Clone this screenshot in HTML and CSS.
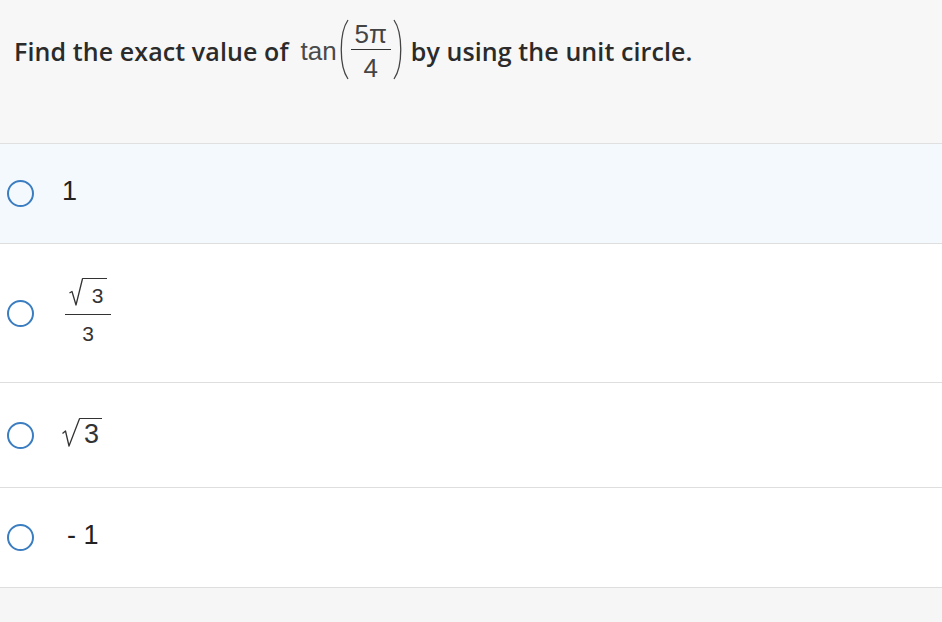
FILE: index.html
```html
<!DOCTYPE html>
<html lang="en">
<head>
<meta charset="utf-8">
<title>Unit circle question</title>
<link rel="stylesheet" href="styles.css">
</head>
<body>
<div class="question">
  <div class="prompt">
    <span class="words">Find the exact value of</span>
    <span class="expr">
      <span class="fn">tan</span>
      <svg class="paren" width="11" height="61" viewBox="0 0 11 61"><path d="M10 1 C1 14 1 47 10 60" fill="none" stroke="#444" stroke-width="1.3"/></svg>
      <span class="frac small">
        <span class="num">5π</span>
        <span class="den">4</span>
      </span>
      <svg class="paren" width="11" height="61" viewBox="0 0 11 61"><path d="M1 1 C10 14 10 47 1 60" fill="none" stroke="#444" stroke-width="1.3"/></svg>
    </span>
    <span class="words">by using the unit circle.</span>
  </div>
</div>
<ul class="choices">
  <li class="choice selected">
    <span class="radio"></span>
    <span class="answer plain">1</span>
  </li>
  <li class="choice">
    <span class="radio"></span>
    <span class="answer frac big">
      <span class="num">
        <span class="sqrt sqrt-sm">
          <svg class="rad" width="14" height="28" viewBox="0 0 14 28"><path d="M0.5 15 L3 13.5 L7 27 L13.5 0.7 L14 0.7" fill="none" stroke="#333" stroke-width="1.3" stroke-linejoin="round"/></svg>
          <span class="radicand">3</span>
        </span>
      </span>
      <span class="den">3</span>
    </span>
  </li>
  <li class="choice">
    <span class="radio"></span>
    <span class="answer">
      <span class="sqrt sqrt-lg">
        <svg class="rad" width="18" height="29" viewBox="0 0 18 29"><path d="M0.5 15.5 L3.5 13 L7 28 L17.5 0.7 L18 0.7" fill="none" stroke="#333" stroke-width="1.3" stroke-linejoin="round"/></svg>
        <span class="radicand">3</span>
      </span>
    </span>
  </li>
  <li class="choice">
    <span class="radio"></span>
    <span class="answer plain neg">- 1</span>
  </li>
</ul>
</body>
</html>
```

FILE: styles.css
```css
html, body {
  margin: 0;
  padding: 0;
}
body {
  background: #f6f6f6;
  font-family: "Open Sans", Lato, sans-serif;
  color: #2b2b2b;
}
.question {
  background: #f7f7f7;
  height: 143px;
  box-sizing: border-box;
  padding: 19px 14px 0 14px;
}
.prompt {
  display: flex;
  align-items: center;
  height: 61px;
}
.words {
  font-size: 25px;
  font-weight: 600;
  letter-spacing: 0.1px;
  margin-top: 2px;
  white-space: nowrap;
}
.expr {
  display: flex;
  align-items: center;
  margin: 0 7px 0 12px;
  font-family: "Liberation Sans", Arial, sans-serif;
  color: #4a4a4a;
}
.fn {
  font-size: 26px;
  margin-top: 4px;
  margin-right: 1px;
}
.paren {
  display: block;
}
.frac {
  display: inline-flex;
  flex-direction: column;
  text-align: center;
  font-family: "Liberation Sans", Arial, sans-serif;
}
.frac .num {
  border-bottom: 1.2px solid #333;
}
.frac.small {
  width: 40px;
  margin: 2.4px 2px 0 2px;
  font-size: 26px;
  line-height: 26px;
  color: #444;
}
.frac.small .num {
  padding-bottom: 2.4px;
}
.frac.small .den {
  padding-top: 4.6px;
}
.choices {
  list-style: none;
  margin: 0;
  padding: 0;
  background: #fff;
  border-top: 1px solid #e0e0e0;
}
.choice {
  display: flex;
  align-items: center;
  gap: 31px;
  padding: 36px 0 36px 7px;
  border-bottom: 1px solid #dedede;
}
.choice.selected {
  background: #f4f9fe;
}
.radio {
  width: 27px;
  height: 27px;
  box-sizing: border-box;
  border: 2.6px solid #3a7dc1;
  border-radius: 50%;
  flex: none;
}
.answer {
  font-family: "Liberation Sans", Arial, sans-serif;
  color: #222;
}
.plain {
  font-size: 27px;
  line-height: 27px;
  margin-left: -3px;
  margin-top: -4px;
}
.neg {
  margin-left: 2px;
}
.sqrt {
  display: inline-flex;
  align-items: flex-start;
}
.rad {
  display: block;
  flex: none;
}
.radicand {
  border-top: 1.3px solid #333;
  color: #333;
}
.sqrt-lg {
  height: 30px;
  margin: -1px 0 2px -3px;
}
.sqrt-lg .radicand {
  font-size: 27px;
  line-height: 28px;
  padding: 0.7px 3px 0 4px;
}
.frac.big {
  width: 46px;
  height: 70px;
  margin: -2px 0;
  color: #333;
}
.frac.big .num {
  padding-bottom: 4px;
}
.sqrt-sm .radicand {
  font-size: 21px;
  line-height: 22px;
  padding: 6px 4px 0 9px;
}
.frac.big .den {
  font-size: 21px;
  line-height: 22px;
  padding-top: 8px;
}
```
